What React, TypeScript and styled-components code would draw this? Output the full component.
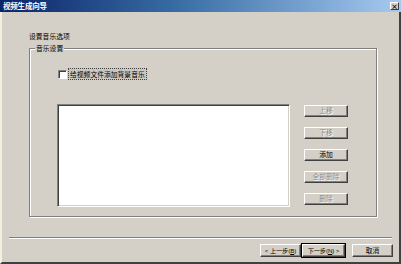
import React from "react";
import styled, { createGlobalStyle } from "styled-components";

const Global = createGlobalStyle`
  html, body { margin: 0; padding: 0; background: #d4d0c8; }
  body { width: 401px; height: 264px; overflow: hidden; }
  * { box-sizing: border-box; }
`;

const FONT = `"Noto Sans CJK SC", "Noto Sans", sans-serif`;
const BTN_FONT = `"Liberation Sans", "Noto Sans CJK SC", sans-serif`;

const Window = styled.div`
  width: 401px;
  height: 264px;
  display: flex;
  flex-direction: column;
  background: #d4d0c8;
  font-family: ${FONT};
  font-size: 6.8px;
  color: #000;
`;

const TitleBar = styled.div`
  height: 12px;
  flex: none;
  display: flex;
  align-items: center;
  justify-content: space-between;
  padding: 0 2px 0 3px;
  background: linear-gradient(to right, #0a246a 0%, #3a6ea5 45%, #a6caf0 100%);
`;

const TitleText = styled.span`
  color: #fff;
  font-weight: bold;
  font-size: 7.5px;
  line-height: 12px;
  letter-spacing: -0.2px;
`;

const CloseBox = styled.div`
  width: 9px;
  height: 8px;
  background: #d4d0c8;
  border-top: 1px solid #fff;
  border-left: 1px solid #fff;
  border-right: 1px solid #404040;
  border-bottom: 1px solid #404040;
  display: flex;
  align-items: center;
  justify-content: center;
  font-size: 7px;
  font-weight: bold;
  line-height: 6px;
  color: #000;
`;

const Frame = styled.div`
  flex: 1;
  display: flex;
  flex-direction: column;
  padding: 19px 7px 0 7px;
  border-left: 2px solid #f3f1dd;
  border-right: 2px solid #404040;
  border-bottom: 2px solid #404040;
`;

const Section = styled.div`
  padding-left: 20px;
  display: flex;
  flex-direction: column;
`;

const Heading = styled.div`
  height: 10px;
  line-height: 10px;
`;

const GroupBox = styled.div`
  position: relative;
  margin-top: 7px;
  width: 348px;
  height: 169px;
  border: 1px solid #808080;
  box-shadow: 1px 1px 0 #fff, inset 1px 1px 0 #fff;
  padding: 19px 0 0 27px;
  display: flex;
  flex-direction: column;
`;

const Legend = styled.span`
  position: absolute;
  top: -6px;
  left: 5px;
  padding: 0 1px;
  line-height: 10px;
  background: #d4d0c8;
`;

const CheckRow = styled.label`
  display: flex;
  align-items: center;
  height: 12px;
  gap: 1px;
`;

const CheckBox = styled.span`
  width: 9px;
  height: 9px;
  margin-left: 1px;
  background: #fff;
  border-top: 1px solid #808080;
  border-left: 1px solid #808080;
  border-right: 1px solid #fff;
  border-bottom: 1px solid #fff;
  box-shadow: inset 1px 1px 0 #404040;
`;

const CheckLabel = styled.span`
  height: 12px;
  line-height: 10px;
  padding: 0 1px;
  border: 1px dotted #404040;
  background: #ccc8c0;
`;

const Main = styled.div`
  display: flex;
  margin-top: 24px;
  gap: 14px;
`;

const ListBox = styled.div`
  width: 233px;
  height: 103px;
  background: #fff;
  border-top: 1px solid #808080;
  border-left: 1px solid #808080;
  border-right: 1px solid #fff;
  border-bottom: 1px solid #fff;
  box-shadow: inset 1px 1px 0 #404040, inset -1px -1px 0 #d4d0c8;
`;

const ButtonCol = styled.div`
  display: flex;
  flex-direction: column;
  gap: 10px;
  margin-top: 1px;
`;

const Btn = styled.button<{
  $w?: number;
  $h?: number;
  $fs?: number;
  $disabled?: boolean;
  $default?: boolean;
}>`
  width: ${(p) => p.$w ?? 44}px;
  height: ${(p) => p.$h ?? 12}px;
  padding: 0;
  margin: 0;
  font-family: ${BTN_FONT};
  font-size: ${(p) => p.$fs ?? 6.8}px;
  line-height: 10px;
  background: #d4d0c8;
  color: ${(p) => (p.$disabled ? "#8a8a8a" : "#000")};
  text-shadow: ${(p) => (p.$disabled ? "1px 1px 0 #fff" : "none")};
  border-top: 1px solid #fff;
  border-left: 1px solid #fff;
  border-right: 1px solid #404040;
  border-bottom: 1px solid #404040;
  box-shadow: inset -1px -1px 0 #808080;
  outline: ${(p) => (p.$default ? "1px solid #000" : "none")};
  outline-offset: 0;
  display: flex;
  align-items: center;
  justify-content: center;
  white-space: nowrap;
  letter-spacing: -0.1px;
`;

const Separator = styled.div`
  margin-top: 20px;
  height: 2px;
  border-top: 1px solid #808080;
  border-bottom: 1px solid #fff;
`;

const Footer = styled.div`
  display: flex;
  justify-content: flex-end;
  margin-top: 5px;
  margin-right: -1px;
`;

const NavGroup = styled.div`
  display: flex;
  gap: 1px;
  margin-right: 7px;
`;

export default function App() {
  return (
    <>
      <Global />
      <Window>
        <TitleBar>
          <TitleText>视频生成向导</TitleText>
          <CloseBox>×</CloseBox>
        </TitleBar>
        <Frame>
          <Section>
            <Heading>设置音乐选项</Heading>
            <GroupBox>
              <Legend>音乐设置</Legend>
              <CheckRow>
                <CheckBox />
                <CheckLabel>给视频文件添加背景音乐</CheckLabel>
              </CheckRow>
              <Main>
                <ListBox />
                <ButtonCol>
                  <Btn $disabled>上移</Btn>
                  <Btn $disabled>下移</Btn>
                  <Btn>添加</Btn>
                  <Btn $disabled>全部删除</Btn>
                  <Btn $disabled>删除</Btn>
                </ButtonCol>
              </Main>
            </GroupBox>
          </Section>
          <Separator />
          <Footer>
            <NavGroup>
              <Btn $w={41} $h={13} $fs={6.2}>&lt; 上一步(<u>B</u>)</Btn>
              <Btn $w={43} $h={13} $fs={6.2} $default>下一步(<u>N</u>) &gt;</Btn>
            </NavGroup>
            <Btn $w={41} $h={13}>取消</Btn>
          </Footer>
        </Frame>
      </Window>
    </>
  );
}
